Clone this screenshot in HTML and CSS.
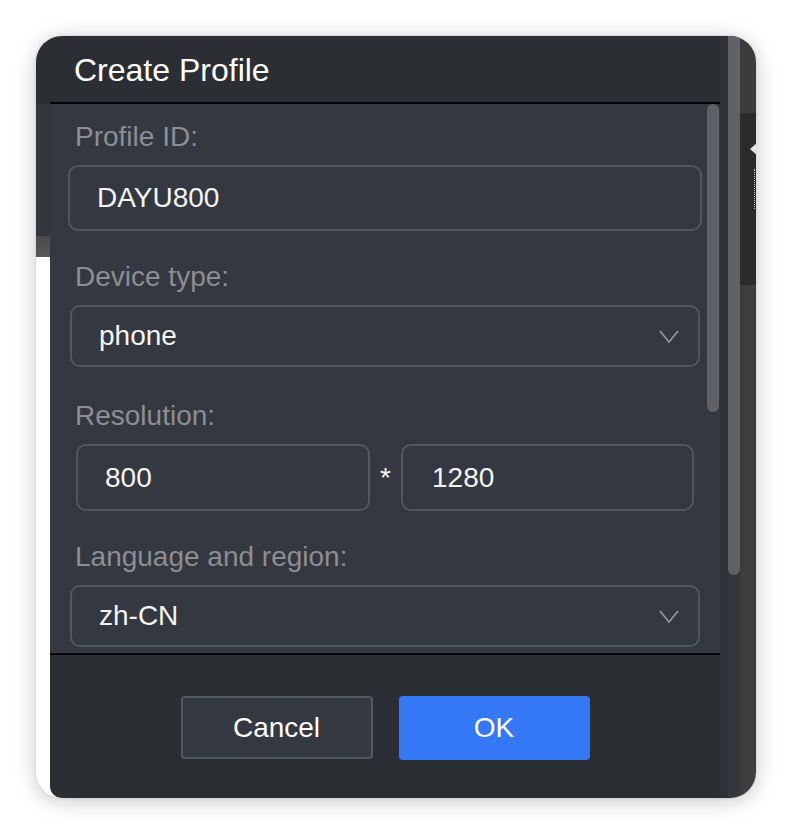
FILE: index.html
```html
<!DOCTYPE html>
<html>
<head>
<meta charset="utf-8">
<title>Create Profile</title>
<link rel="stylesheet" href="styles.css">
</head>
<body>
<div class="window">
  <div class="strip-left">
    <div class="sl-top"></div>
    <div class="sl-mid"></div>
    <div class="sl-bar"></div>
    <div class="sl-white"></div>
  </div>
  <div class="dialog">
    <div class="dlg-header">Create Profile</div>
    <div class="dlg-body">
      <div class="form">
        <div class="label">Profile ID:</div>
        <div class="field field-id gap-30">DAYU800</div>
        <div class="label">Device type:</div>
        <div class="field select gap-33">
          <span>phone</span>
          <svg class="chev" width="20" height="13" viewBox="0 0 20 13"><polyline points="1,1 10,12 19,1" fill="none" stroke="#9a9b9e" stroke-width="1.6"/></svg>
        </div>
        <div class="label">Resolution:</div>
        <div class="res-row gap-30">
          <div class="field res-w">800</div>
          <div class="star">*</div>
          <div class="field res-h">1280</div>
        </div>
        <div class="label">Language and region:</div>
        <div class="field select">
          <span>zh-CN</span>
          <svg class="chev" width="20" height="13" viewBox="0 0 20 13"><polyline points="1,1 10,12 19,1" fill="none" stroke="#9a9b9e" stroke-width="1.6"/></svg>
        </div>
      </div>
      <div class="vscroll"><div class="vthumb"></div></div>
    </div>
    <div class="dlg-footer">
      <button class="btn btn-cancel">Cancel</button>
      <button class="btn btn-ok">OK</button>
    </div>
  </div>
  <div class="strip-a"></div>
  <div class="strip-b"><div class="thumb-b"></div></div>
  <div class="strip-c">
    <div class="c-top"></div>
    <div class="c-dark"><span class="arrow"></span><span class="dots"></span></div>
    <div class="c-rest"></div>
  </div>
</div>
</body>
</html>
```

FILE: styles.css
```css
html, body {
  margin: 0;
  padding: 0;
  background: #ffffff;
}
body {
  font-family: "Liberation Sans", Arial, Helvetica, sans-serif;
  padding: 36px 0 0 36px;
  height: 834px;
  box-sizing: border-box;
  overflow: hidden;
}
.window {
  width: 720px;
  height: 762px;
  border-radius: 26px;
  overflow: hidden;
  display: flex;
  background: #ffffff;
  box-shadow: 0 3px 22px rgba(0, 0, 0, 0.22), 0 0 2px rgba(0, 0, 0, 0.15);
}

/* left strip of underlying window */
.strip-left {
  width: 14px;
  display: flex;
  flex-direction: column;
  flex: none;
}
.sl-top { height: 68px; background: #2b2e33; }
.sl-mid { height: 132px; background: #33363d; }
.sl-bar { height: 21px; background: linear-gradient(#4a4a4a, #5a5a5a); }
.sl-white { flex: 1; background: #ffffff; }

/* dialog */
.dialog {
  width: 670px;
  flex: none;
  display: flex;
  flex-direction: column;
}
.dlg-header {
  height: 68px;
  box-sizing: border-box;
  background: #2b2e33;
  border-bottom: 2px solid #050505;
  color: #ffffff;
  font-size: 32px;
  line-height: 36px;
  padding: 16px 0 0 24px;
}
.dlg-body {
  height: 551px;
  box-sizing: border-box;
  background: #343840;
  border-bottom: 2px solid #050505;
  display: flex;
  overflow: hidden;
}
.form {
  flex: 1;
  display: flex;
  flex-direction: column;
  padding-top: 17px;
}
.label {
  font-size: 28px;
  line-height: 32px;
  color: #8c8e92;
  margin: 0 0 12px 25px;
}
.field {
  box-sizing: border-box;
  border: 2px solid #54575d;
  border-radius: 10px;
  background: #343840;
  color: #f4f4f4;
  font-size: 28px;
  padding-left: 27px;
  display: flex;
  align-items: center;
}
.field-id {
  height: 66px;
  margin: 0 4px 0 18px;
}
.select {
  height: 62px;
  margin: 0 6px 0 20px;
  justify-content: space-between;
  padding-right: 19px;
}
.chev { display: block; }
.gap-30 { margin-bottom: 30px; }
.gap-33 { margin-bottom: 33px; }
.res-row {
  display: flex;
  height: 67px;
  margin-left: 26px;
}
.res-w { width: 294px; height: 67px; }
.res-h { width: 293px; height: 67px; padding-left: 29px; }
.star {
  width: 31px;
  text-align: center;
  color: #f4f4f4;
  font-size: 28px;
  display: flex;
  align-items: center;
  justify-content: center;
}
.vscroll {
  width: 14px;
  flex: none;
  padding: 0 1px;
  box-sizing: border-box;
}
.vthumb {
  width: 12px;
  height: 308px;
  border-radius: 6px;
  background: #5f6166;
}

/* footer */
.dlg-footer {
  flex: 1;
  background: #2b2e33;
  border-bottom-left-radius: 12px;
  display: flex;
  justify-content: center;
  align-items: flex-start;
  gap: 26px;
  padding-top: 41px;
  box-sizing: border-box;
}
.btn {
  font-family: "Liberation Sans", Arial, Helvetica, sans-serif;
  font-size: 28px;
  color: #ffffff;
  border-radius: 4px;
  box-sizing: border-box;
  padding: 0;
  margin: 0;
}
.btn-cancel {
  width: 192px;
  height: 63px;
  background: #343840;
  border: 2px solid #55585d;
}
.btn-ok {
  width: 191px;
  height: 64px;
  background: #3478f6;
  border: none;
}

/* right strips */
.strip-a {
  width: 8px;
  flex: none;
  background: #2e3136;
}
.strip-b {
  width: 12px;
  flex: none;
  background: #33363c;
}
.thumb-b {
  height: 539px;
  background: #606266;
  border-radius: 0 0 6px 6px;
}
.strip-c {
  width: 16px;
  flex: none;
  display: flex;
  flex-direction: column;
}
.c-top { height: 77px; background: #3c3c3c; }
.c-dark {
  height: 172px;
  background: #2b2b2b;
  position: relative;
}
.c-rest { flex: 1; background: #3d3d3d; }
.arrow {
  position: absolute;
  left: 10px;
  top: 30px;
  width: 0;
  height: 0;
  border-top: 6px solid transparent;
  border-bottom: 6px solid transparent;
  border-right: 7px solid #e6e6e6;
}
.dots {
  position: absolute;
  left: 14px;
  top: 56px;
  width: 0;
  height: 40px;
  border-left: 1px dotted #cfcfcf;
}
```
